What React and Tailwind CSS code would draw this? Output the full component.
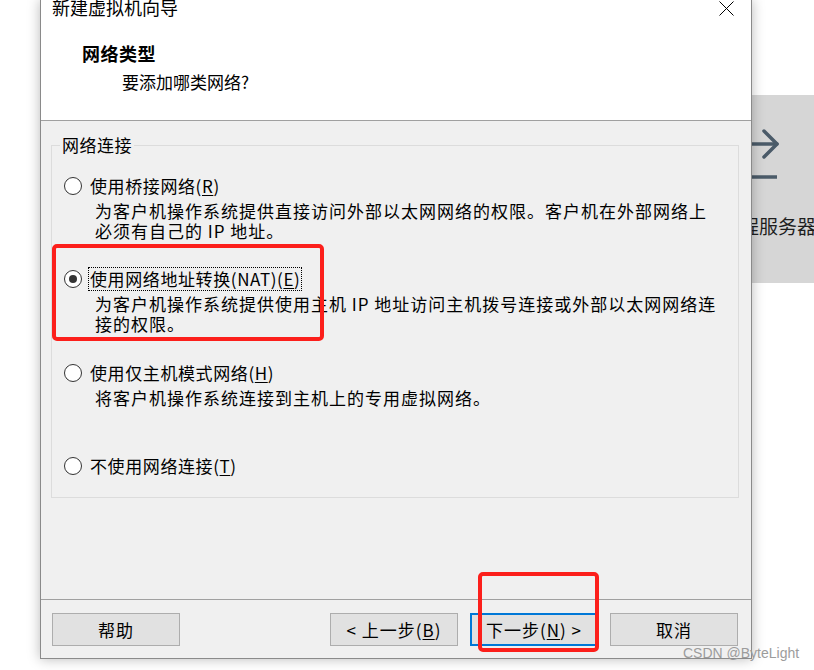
const FONT = { fontFamily: '"Noto Sans CJK SC", "Noto Sans", sans-serif' }

function Radio({ checked }) {
  return (
    <span className="flex h-[18px] w-[18px] shrink-0 items-center justify-center rounded-full border border-[#333333] bg-white">
      {checked && <span className="h-[8px] w-[8px] rounded-full bg-[#333333]" />}
    </span>
  )
}

function Option({ label, hotkey, lines = [], checked, focused, className }) {
  return (
    <div className={className}>
      <div className="flex h-[24px] items-center">
        <Radio checked={checked} />
        <span
          className={
            'ml-[6px] flex h-[24px] items-center px-[1px] text-[17px] leading-[20px] tracking-[0.6px] text-black border border-dotted ' +
            (focused ? 'border-black' : 'border-transparent')
          }
        >
          {label}(<span className="underline underline-offset-2">{hotkey}</span>)
        </span>
      </div>
      {lines.length > 0 && (
        <div className="mt-[3px] pl-[31px] text-[17px] leading-[20px] tracking-[1px] text-black whitespace-nowrap">
          {lines.map((l, i) => (
            <div key={i}>{l}</div>
          ))}
        </div>
      )}
    </div>
  )
}

function Button({ children, primary }) {
  return (
    <button
      type="button"
      className={
        'flex h-[33px] w-[128px] items-center justify-center bg-[#e1e1e1] text-[17px] leading-[20px] tracking-[1px] text-black ' +
        (primary ? 'border-2 border-[#0078d7]' : 'border border-[#adadad]')
      }
    >
      {children}
    </button>
  )
}

export default function App() {
  return (
    <div className="relative h-[670px] w-[814px] overflow-hidden bg-white" style={FONT}>
      {/* page behind the wizard */}
      <div className="flex justify-end pt-[95px]">
        <div className="h-[188px] w-[300px] bg-[#d6d6d6] pl-[210px]">
          <svg width="60" height="62" viewBox="0 0 60 62" className="mt-[24px]" fill="none" stroke="#4b5b69" strokeWidth="3.5" strokeLinecap="round" strokeLinejoin="round">
            <path d="M0 25 H53" />
            <path d="M40 12 L53 25 L40 38" />
            <path d="M0 58 H53" strokeLinecap="butt" />
          </svg>
          <div className="ml-[-3px] mt-[33px] whitespace-nowrap text-[19px] leading-[24px] text-[#1e1e1e]">远程服务器</div>
        </div>
      </div>

      {/* wizard window */}
      <div className="absolute left-[40px] top-0 flex h-[659px] w-[712px] flex-col border-x border-b border-[#8a8a8a] bg-white shadow-[0_0_12px_rgba(0,0,0,0.28)]">
        <div className="h-[121px] border-b border-[#a0a0a0] bg-white">
          <div className="flex h-[22px] items-start justify-between">
            <span className="-mt-[3px] pl-[11px] text-[18px] leading-[20px] text-black">新建虚拟机向导</span>
            <svg width="15" height="15" viewBox="0 0 15 15" className="mr-[17px] mt-[1px]" stroke="#000" strokeWidth="1">
              <path d="M0.5 0.5 L14.5 14.5 M14.5 0.5 L0.5 14.5" />
            </svg>
          </div>
          <div className="mt-[21px] pl-[41px] text-[18px] font-bold leading-[20px] tracking-[0.5px] text-black">网络类型</div>
          <div className="mt-[9px] pl-[81px] text-[17px] leading-[20px] text-black">要添加哪类网络?</div>
        </div>

        <div className="h-[479px] border-b border-[#a0a0a0] bg-[#f0f0f0] pt-[14px]">
          <fieldset className="ml-[10px] w-[688px] border border-[#dcdcdc]">
            <legend className="ml-[8px] px-[2px] text-[17px] leading-[20px] tracking-[0.5px] text-black">网络连接</legend>
            <div className="pb-[19px] pl-[12px] pt-[19px]">
              <Option
                className="h-[93px]"
                label="使用桥接网络"
                hotkey="R"
                lines={['为客户机操作系统提供直接访问外部以太网网络的权限。客户机在外部网络上', '必须有自己的 IP 地址。']}
              />
              <Option
                className="h-[94px]"
                label="使用网络地址转换(NAT)"
                hotkey="E"
                checked
                focused
                lines={['为客户机操作系统提供使用主机 IP 地址访问主机拨号连接或外部以太网网络连', '接的权限。']}
              />
              <Option
                className="h-[93px]"
                label="使用仅主机模式网络"
                hotkey="H"
                lines={['将客户机操作系统连接到主机上的专用虚拟网络。']}
              />
              <Option className="h-[24px]" label="不使用网络连接" hotkey="T" />
            </div>
          </fieldset>
        </div>

        <div className="flex h-[58px] items-start bg-[#f0f0f0] pl-[11px] pr-[13px] pt-[13px]">
          <Button>帮助</Button>
          <div className="ml-auto flex gap-[12px]">
            <Button>
              &lt; 上一步(<span className="underline underline-offset-2">B</span>)
            </Button>
            <Button primary>
              下一步(<span className="underline underline-offset-2">N</span>) &gt;
            </Button>
            <Button>取消</Button>
          </div>
        </div>
      </div>

      {/* red annotation boxes */}
      <div className="absolute left-[52px] top-[244px] h-[97px] w-[272px] rounded-[5px] border-[4px] border-[#fc1f1b]" />
      <div className="absolute left-[478px] top-[572px] h-[80px] w-[121px] rounded-[5px] border-[4px] border-[#fc1f1b]" />

      {/* watermark */}
      <div
        className="absolute left-[683px] top-[643px] text-[14px] leading-[20px] text-[#9c9c9c]"
        style={{ fontFamily: '"Liberation Sans", Arial, sans-serif' }}
      >
        CSDN @ByteLight
      </div>
    </div>
  )
}
